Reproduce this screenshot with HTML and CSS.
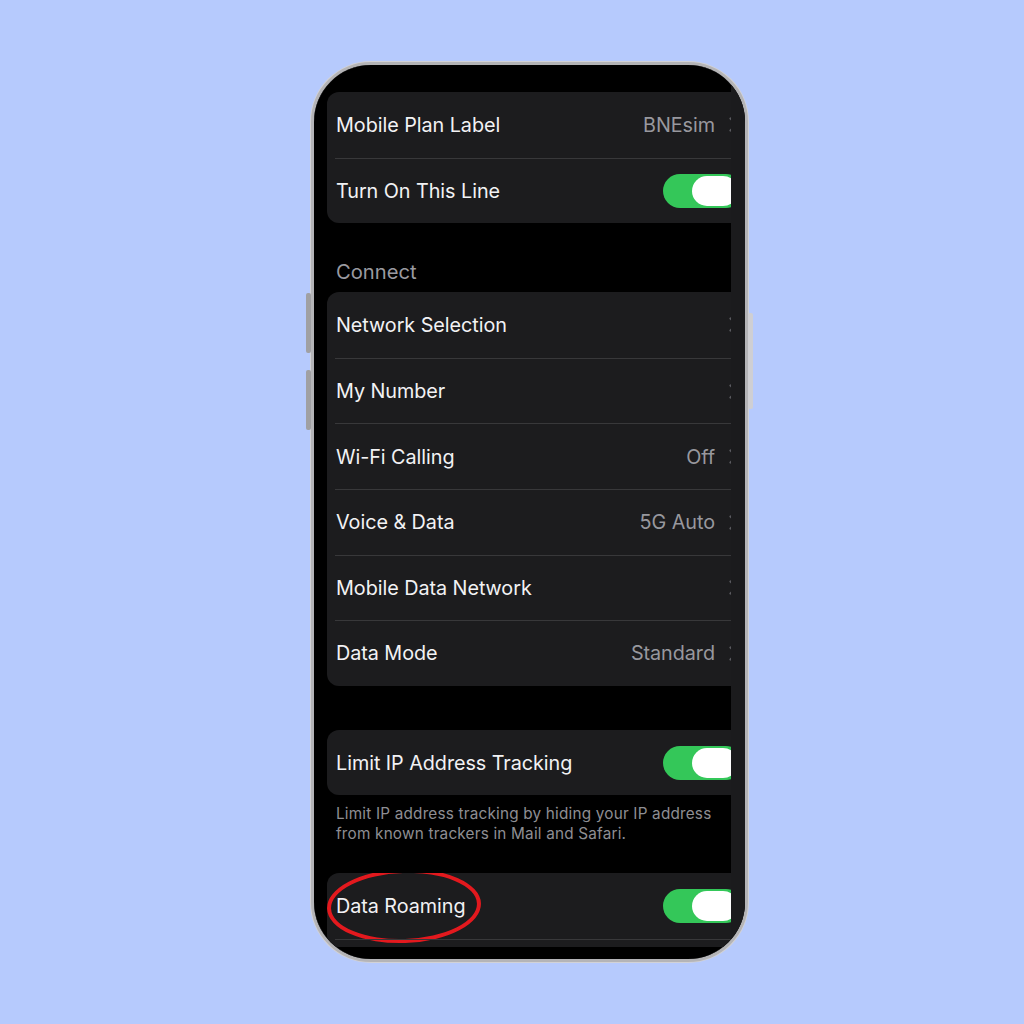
FILE: index.html
```html
<!DOCTYPE html>
<html lang="en">
<head>
<meta charset="utf-8">
<title>Mobile Plan Settings</title>
<link rel="stylesheet" href="styles.css">
</head>
<body>
<div class="stage">
  <div class="phone">
    <span class="btn btn-vol-up"></span>
    <span class="btn btn-vol-down"></span>
    <span class="btn btn-power"></span>
    <div class="bezel">
      <div class="screen">
        <div class="card card-first">
          <div class="row">
            <span class="label">Mobile Plan Label</span>
            <span class="trail"><span class="value">BNEsim</span><svg class="chev" viewBox="0 0 9 15" width="9" height="15"><path d="M1.5 1.5 L7.5 7.5 L1.5 13.5" fill="none" stroke="#5b5b60" stroke-width="2.2" stroke-linecap="round" stroke-linejoin="round"/></svg></span>
          </div>
          <div class="row">
            <span class="label">Turn On This Line</span>
            <span class="toggle"><span class="knob"></span></span>
          </div>
        </div>

        <div class="section-header">Connect</div>

        <div class="card">
          <div class="row">
            <span class="label">Network Selection</span>
            <span class="trail"><svg class="chev" viewBox="0 0 9 15" width="9" height="15"><path d="M1.5 1.5 L7.5 7.5 L1.5 13.5" fill="none" stroke="#5b5b60" stroke-width="2.2" stroke-linecap="round" stroke-linejoin="round"/></svg></span>
          </div>
          <div class="row">
            <span class="label">My Number</span>
            <span class="trail"><svg class="chev" viewBox="0 0 9 15" width="9" height="15"><path d="M1.5 1.5 L7.5 7.5 L1.5 13.5" fill="none" stroke="#5b5b60" stroke-width="2.2" stroke-linecap="round" stroke-linejoin="round"/></svg></span>
          </div>
          <div class="row">
            <span class="label">Wi-Fi Calling</span>
            <span class="trail"><span class="value">Off</span><svg class="chev" viewBox="0 0 9 15" width="9" height="15"><path d="M1.5 1.5 L7.5 7.5 L1.5 13.5" fill="none" stroke="#5b5b60" stroke-width="2.2" stroke-linecap="round" stroke-linejoin="round"/></svg></span>
          </div>
          <div class="row">
            <span class="label">Voice &amp; Data</span>
            <span class="trail"><span class="value">5G Auto</span><svg class="chev" viewBox="0 0 9 15" width="9" height="15"><path d="M1.5 1.5 L7.5 7.5 L1.5 13.5" fill="none" stroke="#5b5b60" stroke-width="2.2" stroke-linecap="round" stroke-linejoin="round"/></svg></span>
          </div>
          <div class="row">
            <span class="label">Mobile Data Network</span>
            <span class="trail"><svg class="chev" viewBox="0 0 9 15" width="9" height="15"><path d="M1.5 1.5 L7.5 7.5 L1.5 13.5" fill="none" stroke="#5b5b60" stroke-width="2.2" stroke-linecap="round" stroke-linejoin="round"/></svg></span>
          </div>
          <div class="row">
            <span class="label">Data Mode</span>
            <span class="trail"><span class="value">Standard</span><svg class="chev" viewBox="0 0 9 15" width="9" height="15"><path d="M1.5 1.5 L7.5 7.5 L1.5 13.5" fill="none" stroke="#5b5b60" stroke-width="2.2" stroke-linecap="round" stroke-linejoin="round"/></svg></span>
          </div>
        </div>

        <div class="card card-gap">
          <div class="row">
            <span class="label">Limit IP Address Tracking</span>
            <span class="toggle"><span class="knob"></span></span>
          </div>
        </div>
        <p class="footer">Limit IP address tracking by hiding your IP address from known trackers in Mail and Safari.</p>

        <div class="card card-last">
          <div class="row row-highlight">
            <span class="label">Data Roaming</span>
            <span class="toggle"><span class="knob"></span></span>
            <span class="circle"></span>
          </div>
          <div class="row row-stub"></div>
        </div>
      </div>
      <div class="edge"></div>
    </div>
  </div>
</div>
</body>
</html>
```

FILE: styles.css
```css
* { box-sizing: border-box; }

html, body {
  margin: 0;
  padding: 0;
}

body {
  width: 1024px;
  height: 1024px;
  background: #b6cafd;
  font-family: "Inter", "Liberation Sans", sans-serif;
  overflow: hidden;
}

.stage {
  padding: 62px 0 0 311px;
}

.phone {
  position: relative;
  width: 437px;
  height: 900px;
  border-radius: 60px;
  border: 3px solid #b4b4b7;
  background: #000;
  box-shadow: 0 0 0 1px #d2d2d6, inset 0 0 0 1px #8d8d90;
}

.btn {
  position: absolute;
  background: #a0a0a3;
  border-radius: 2px;
}
.btn-vol-up { left: -8px; top: 228px; width: 5px; height: 60px; }
.btn-vol-down { left: -8px; top: 305px; width: 5px; height: 60px; }
.btn-power { right: -8px; top: 248px; width: 5px; height: 96px; background: #cfcfd3; }

.bezel {
  display: flex;
  height: 100%;
  border-radius: 57px;
  overflow: hidden;
  background: #000;
}

.screen {
  flex: 1;
  padding: 27px 0 0 13px;
  overflow: hidden;
}

.edge {
  width: 14px;
  background: #1b1b1d;
}

.card {
  width: 404px;
  background: #1c1c1e;
  border-radius: 12px 0 0 12px;
  padding-left: 8px;
  overflow: hidden;
}

.card-gap { margin-top: 44px; }
.card-last { margin-top: 30px; }

.row {
  position: relative;
  display: flex;
  align-items: center;
  justify-content: space-between;
  height: 65.6px;
  padding-left: 1px;
}
.row + .row { border-top: 1px solid #38383a; }

.label {
  color: #f2f2f4;
  font-size: 19.8px;
  letter-spacing: -0.05px;
}

.trail {
  display: flex;
  align-items: center;
  margin-right: -7px;
}

.value {
  color: #98989e;
  font-size: 19.8px;
  letter-spacing: -0.05px;
  margin-right: 14px;
}

.chev { display: block; }

.toggle {
  position: relative;
  width: 80px;
  height: 34px;
  border-radius: 17px;
  background: #34c759;
  margin-right: -12px;
}
.knob {
  position: absolute;
  left: 29px;
  top: 2px;
  width: 46px;
  height: 30px;
  border-radius: 15px;
  background: #fff;
}

.section-header {
  color: #9a9aa0;
  font-size: 20.2px;
  line-height: 24px;
  padding: 37px 0 8px 9px;
}

.footer {
  margin: 0;
  padding: 9px 16px 0 9px;
  color: #8e8e93;
  font-size: 15.3px;
  line-height: 19.5px;
  letter-spacing: 0.2px;
}

.row-stub { height: 8px; }

.circle {
  position: absolute;
  left: -8px;
  top: -4px;
  width: 154px;
  height: 74px;
  border: 4.5px solid #e3191e;
  border-radius: 50%;
  transform: rotate(-2deg);
}
```
